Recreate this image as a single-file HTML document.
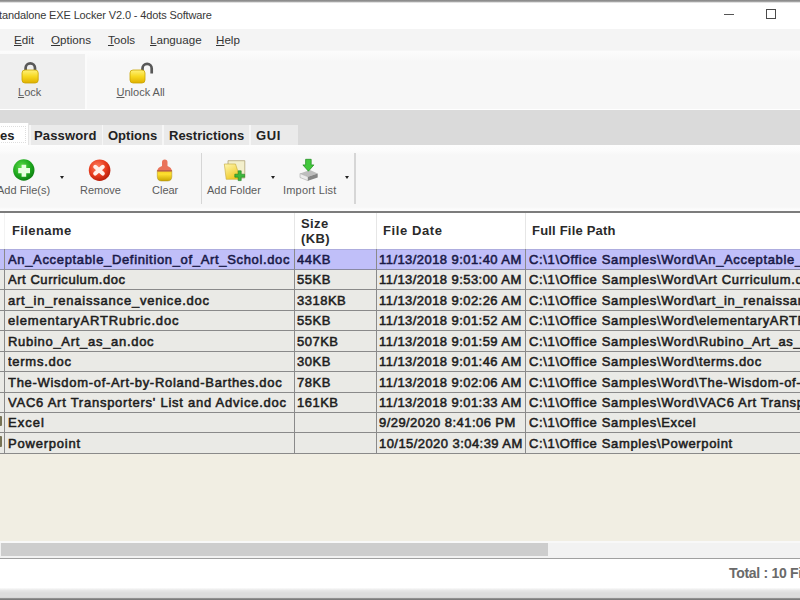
<!DOCTYPE html>
<html><head><meta charset="utf-8">
<style>
*{margin:0;padding:0;box-sizing:border-box}
html,body{width:800px;height:600px;overflow:hidden;background:#fff;font-family:"Liberation Sans",sans-serif}
.a{position:absolute}
.t{position:absolute;white-space:nowrap;line-height:1}
.r{position:absolute;left:0;width:800px;height:14px;font-size:13px;color:#1e1e1e;-webkit-text-stroke:.55px currentColor}
.r i{position:absolute;top:0;font-style:normal;white-space:nowrap;overflow:hidden;line-height:14px}
.s{color:#1a1a48}
.h{position:absolute;white-space:nowrap;line-height:1;font-size:13px;font-weight:bold;color:#2a2a2a;letter-spacing:.4px}
u{text-decoration:underline;text-underline-offset:.5px;text-decoration-thickness:1px}
</style></head><body>
<!-- top border -->
<!-- title bar -->
<div class="a" style="left:0;top:1px;width:800px;height:27px;background:#fff"></div>
<div class="a" style="left:0;top:0;width:800px;height:2.5px;background:linear-gradient(#8a8a8a,#909090 40%,#fff)"></div>
<div class="t" style="left:-1px;top:10px;font-size:11px;color:#383838;letter-spacing:-0.13px">tandalone EXE Locker V2.0 - 4dots Software</div>
<div class="a" style="left:724px;top:14px;width:10px;height:1px;background:#555"></div>
<div class="a" style="left:766px;top:9px;width:10px;height:10px;border:1px solid #4a4a4a"></div>
<!-- menu bar -->
<div class="a" style="left:0;top:28.5px;width:800px;height:22px;background:#f4f4f4"></div>
<div class="t" style="left:14px;top:34px;font-size:11.6px;color:#333"><u>E</u>dit</div>
<div class="t" style="left:51px;top:34px;font-size:11.6px;color:#333"><u>O</u>ptions</div>
<div class="t" style="left:108px;top:34px;font-size:11.6px;color:#333"><u>T</u>ools</div>
<div class="t" style="left:150px;top:34px;font-size:11.6px;color:#333"><u>L</u>anguage</div>
<div class="t" style="left:216px;top:34px;font-size:11.6px;color:#333"><u>H</u>elp</div>
<!-- toolbar 1 -->
<div class="a" style="left:0;top:50px;width:800px;height:59px;background:#f7f7f7"></div>
<div class="a" style="left:0;top:50.5px;width:800px;height:10px;background:linear-gradient(#fcfcfc,#fafafa 40%,#f7f7f7)"></div>
<div class="a" style="left:85px;top:54px;width:2px;height:55px;background:#fbfbfb"></div>
<div class="a" style="left:0;top:54px;width:85px;height:55px;background:#efefef"></div>
<div class="t" style="left:18px;top:87px;font-size:11px;color:#5c5c5c"><u>L</u>ock</div>
<div class="t" style="left:116.5px;top:87px;font-size:11px;color:#5c5c5c"><u>U</u>nlock All</div>
<!-- gray band -->
<div class="a" style="left:0;top:109.5px;width:800px;height:35.5px;background:#dadada"></div>
<!-- tabs -->
<div class="a" style="left:0;top:125px;width:297.5px;height:19.5px;background:#eaeaea"></div>
<div class="a" style="left:29px;top:125px;width:1.5px;height:20px;background:#f6f6f6"></div>
<div class="a" style="left:101.5px;top:125px;width:1.5px;height:20px;background:#f6f6f6"></div>
<div class="a" style="left:162px;top:125px;width:1.5px;height:20px;background:#f6f6f6"></div>
<div class="a" style="left:249px;top:125px;width:1.5px;height:20px;background:#f6f6f6"></div>
<div class="a" style="left:0;top:123px;width:29px;height:22px;background:#fff;border-right:1px solid #e4e4e4"></div>
<div class="a" style="left:-1px;top:126px;width:27px;height:16.5px;border:1px dotted #dedede"></div>
<div class="t" style="left:0px;top:128.5px;font-size:13px;font-weight:bold;color:#222">es</div>
<div class="t" style="left:34px;top:128.5px;font-size:13px;font-weight:bold;color:#222;letter-spacing:.15px">Password</div>
<div class="t" style="left:108px;top:128.5px;font-size:13px;font-weight:bold;color:#222">Options</div>
<div class="t" style="left:169px;top:128.5px;font-size:13px;font-weight:bold;color:#222">Restrictions</div>
<div class="t" style="left:256px;top:128.5px;font-size:13px;font-weight:bold;color:#222;letter-spacing:.6px">GUI</div>
<!-- toolbar 2 -->
<div class="a" style="left:0;top:144.5px;width:800px;height:66.5px;background:linear-gradient(#fdfdfd,#fbfbfb 6px,#f7f7f7 10px,#f7f7f7 62px,#fcfcfc 64px)"></div>
<div class="a" style="left:200.5px;top:153px;width:1.5px;height:51px;background:#d6d6d6"></div>
<div class="a" style="left:354px;top:153px;width:1.5px;height:51px;background:#d6d6d6"></div>
<div class="t" style="left:-3px;top:185px;font-size:11px;color:#5c5c5c">Add File(s)</div>
<div class="t" style="left:80px;top:185px;font-size:11px;color:#5c5c5c">Remove</div>
<div class="t" style="left:152px;top:185px;font-size:11px;color:#5c5c5c">Clear</div>
<div class="t" style="left:207px;top:185px;font-size:11px;color:#5c5c5c">Add Folder</div>
<div class="t" style="left:283px;top:185px;font-size:11px;color:#5c5c5c;letter-spacing:.2px">Import List</div>

<!-- lock icon -->
<svg class="a" style="left:18px;top:58px" width="24" height="28" viewBox="0 0 24 28">
<defs><linearGradient id="yl" x1="0" y1="0" x2="0" y2="1"><stop offset="0" stop-color="#fff27a"/><stop offset=".5" stop-color="#f7d820"/><stop offset="1" stop-color="#e0b000"/></linearGradient></defs>
<path d="M7.6 13 V10 a4.7 4.7 0 0 1 9.4 0 V13" fill="none" stroke="#585858" stroke-width="2.7"/>
<rect x="4" y="12" width="16.2" height="13" rx="3" fill="url(#yl)" stroke="#c9a300" stroke-width=".8"/>
</svg>
<!-- unlock icon -->
<svg class="a" style="left:126px;top:58px" width="30" height="28" viewBox="0 0 30 28">
<path d="M16.5 13.5 V10.5 a4.6 4.6 0 0 1 9.2 0 V15.5" fill="none" stroke="#585858" stroke-width="2.7"/>
<rect x="4" y="12" width="15" height="13" rx="3" fill="url(#yl)" stroke="#c9a300" stroke-width=".8"/>
</svg>
<!-- add files -->
<svg class="a" style="left:12px;top:158px" width="24" height="24" viewBox="0 0 24 24">
<defs><radialGradient id="gr" cx=".4" cy=".35" r=".7"><stop offset="0" stop-color="#5fdc4a"/><stop offset=".6" stop-color="#1ea81e"/><stop offset="1" stop-color="#0c7a10"/></radialGradient>
<radialGradient id="rd" cx=".4" cy=".35" r=".7"><stop offset="0" stop-color="#ff8060"/><stop offset=".6" stop-color="#e63a1c"/><stop offset="1" stop-color="#b01a08"/></radialGradient></defs>
<circle cx="11.8" cy="12" r="10.7" fill="url(#gr)"/>
<path d="M9.6 6.8h4.6v3.3h3.8v5.2h-3.8v3.5H9.6v-3.5H6.2V10.1h3.4z" fill="#e8ffe0"/>
</svg>
<div class="a" style="left:60px;top:176px;width:0;height:0;border-left:2.5px solid transparent;border-right:2.5px solid transparent;border-top:3px solid #222"></div>
<!-- remove -->
<svg class="a" style="left:88px;top:159px" width="24" height="24" viewBox="0 0 24 24">
<circle cx="11.6" cy="11.2" r="10.8" fill="url(#rd)"/>
<path d="M7.2 7.8 L14.8 14.6 M14.8 7.8 L7.2 14.6" stroke="#fff0ea" stroke-width="4" stroke-linecap="round"/>
</svg>
<!-- clear brush -->
<svg class="a" style="left:155px;top:158px" width="20" height="25" viewBox="0 0 20 25">
<defs><linearGradient id="by" x1="0" y1="0" x2="0" y2="1"><stop offset="0" stop-color="#f0d020"/><stop offset=".35" stop-color="#ffe030"/><stop offset="1" stop-color="#c8a400"/></linearGradient></defs>
<path d="M7 4.2 a2.75 2.7 0 0 1 5.5 0 V8 Q16.8 9.5 16.8 13 H2.3 Q2.3 9.5 7 8 Z" fill="#e9735a"/>
<path d="M2.3 12.5 H16.8 V18.5 Q16.8 23 12.5 23 H6.6 Q2.3 23 2.3 18.5 Z" fill="url(#by)" stroke="#a89020" stroke-width=".5"/>
<rect x="2.3" y="12" width="14.5" height="1.6" fill="#b8604a"/>
</svg>
<!-- add folder -->
<svg class="a" style="left:222px;top:158px" width="26" height="26" viewBox="0 0 26 26">
<defs><linearGradient id="fy" x1="0" y1="0" x2=".6" y2="1"><stop offset="0" stop-color="#fff7b0"/><stop offset="1" stop-color="#efc820"/></linearGradient></defs>
<path d="M6 2.7 H22.8 V20 H6 Z" fill="#f3efcc" stroke="#a89a68" stroke-width=".7"/>
<path d="M2.3 6 H13.5 L18.5 21.3 H4.2 Z" fill="url(#fy)" stroke="#c4a838" stroke-width=".6"/>
<path d="M16.2 12.8h3v3.4h3.4v3h-3.4v3.4h-3v-3.4h-3.4v-3h3.4z" fill="#3cb83c" stroke="#1f801f" stroke-width=".6"/>
</svg>
<div class="a" style="left:271px;top:176px;width:0;height:0;border-left:2.5px solid transparent;border-right:2.5px solid transparent;border-top:3px solid #222"></div>
<!-- import list -->
<svg class="a" style="left:298px;top:157px" width="22" height="26" viewBox="0 0 22 26">
<path d="M2 16.5 L12 13 L19.7 16.5 L10 19.8 Z" fill="#bdbdbd"/>
<path d="M2 16.5 L10 19.8 L10 23.7 L2 20.5 Z" fill="#ececec" stroke="#9a9a9a" stroke-width=".5"/>
<path d="M10 19.8 L19.7 16.5 L19.7 20.5 L10 23.7 Z" fill="#858585"/>
<path d="M7.6 2.3 h5.6 v5.6 h2.7 l-5.5 6.3 l-5.5 -6.3 h2.7 z" fill="#42c83c" stroke="#1e8a1e" stroke-width=".7" stroke-linejoin="round"/>
</svg>
<div class="a" style="left:345px;top:176px;width:0;height:0;border-left:2.5px solid transparent;border-right:2.5px solid transparent;border-top:3px solid #222"></div>
<!-- grid -->
<div class="a" style="left:0;top:211px;width:800px;height:2px;background:#7c7c7c"></div>
<div class="a" style="left:0;top:213px;width:800px;height:36px;background:#fff"></div>
<div class="a" style="left:0;top:249px;width:800px;height:205px;background:#eaeae6"></div>
<div class="a" style="left:0;top:248.5px;width:800px;height:20.5px;background:#c0bff9"></div>
<div class="a" style="left:0;top:248.5px;width:800px;height:1.5px;background:#aeaddf"></div>

<div class="h" style="left:12px;top:223.5px">Filename</div>
<div class="h" style="left:301px;top:217px">Size</div>
<div class="h" style="left:301px;top:231.5px">(KB)</div>
<div class="h" style="left:383px;top:223.5px;letter-spacing:.6px">File Date</div>
<div class="h" style="left:532px;top:223.5px;letter-spacing:.2px">Full File Path</div>
<div class="a" style="left:4px;top:213px;width:1px;height:36px;background:#f3f3f3"></div>
<div class="a" style="left:294px;top:213px;width:1px;height:36px;background:#e6e6e6"></div>
<div class="a" style="left:376px;top:213px;width:1px;height:36px;background:#e6e6e6"></div>
<div class="a" style="left:525px;top:213px;width:1px;height:36px;background:#e6e6e6"></div>
<div class="r s" style="top:253.0px"><i style="left:8px;width:284px;letter-spacing:0.66px">An_Acceptable_Definition_of_Art_Schol.doc</i><i style="left:297px;width:78px;letter-spacing:.5px">44KB</i><i style="left:379px;width:144px;letter-spacing:.44px">11/13/2018 9:01:40 AM</i><i style="left:529px;width:280px;letter-spacing:.66px">C:\1\Office Samples\Word\An_Acceptable_Definition_of_Art_Schol.doc</i></div>
<div class="r" style="top:273.4px"><i style="left:8px;width:284px;letter-spacing:0.55px">Art Curriculum.doc</i><i style="left:297px;width:78px;letter-spacing:.5px">55KB</i><i style="left:379px;width:144px;letter-spacing:.44px">11/13/2018 9:53:00 AM</i><i style="left:529px;width:280px;letter-spacing:.66px">C:\1\Office Samples\Word\Art Curriculum.doc</i></div>
<div class="r" style="top:293.8px"><i style="left:8px;width:284px;letter-spacing:0.78px">art_in_renaissance_venice.doc</i><i style="left:297px;width:78px;letter-spacing:.5px">3318KB</i><i style="left:379px;width:144px;letter-spacing:.44px">11/13/2018 9:02:26 AM</i><i style="left:529px;width:280px;letter-spacing:.66px">C:\1\Office Samples\Word\art_in_renaissance_venice.doc</i></div>
<div class="r" style="top:314.2px"><i style="left:8px;width:284px;letter-spacing:0.83px">elementaryARTRubric.doc</i><i style="left:297px;width:78px;letter-spacing:.5px">55KB</i><i style="left:379px;width:144px;letter-spacing:.44px">11/13/2018 9:01:52 AM</i><i style="left:529px;width:280px;letter-spacing:.66px">C:\1\Office Samples\Word\elementaryARTRubric.doc</i></div>
<div class="r" style="top:334.6px"><i style="left:8px;width:284px;letter-spacing:0.7px">Rubino_Art_as_an.doc</i><i style="left:297px;width:78px;letter-spacing:.5px">507KB</i><i style="left:379px;width:144px;letter-spacing:.44px">11/13/2018 9:01:59 AM</i><i style="left:529px;width:280px;letter-spacing:.66px">C:\1\Office Samples\Word\Rubino_Art_as_an.doc</i></div>
<div class="r" style="top:355.1px"><i style="left:8px;width:284px;letter-spacing:0.73px">terms.doc</i><i style="left:297px;width:78px;letter-spacing:.5px">30KB</i><i style="left:379px;width:144px;letter-spacing:.44px">11/13/2018 9:01:46 AM</i><i style="left:529px;width:280px;letter-spacing:.66px">C:\1\Office Samples\Word\terms.doc</i></div>
<div class="r" style="top:375.5px"><i style="left:8px;width:284px;letter-spacing:0.7px">The-Wisdom-of-Art-by-Roland-Barthes.doc</i><i style="left:297px;width:78px;letter-spacing:.5px">78KB</i><i style="left:379px;width:144px;letter-spacing:.44px">11/13/2018 9:02:06 AM</i><i style="left:529px;width:280px;letter-spacing:.66px">C:\1\Office Samples\Word\The-Wisdom-of-Art-by-Roland-Barthes.doc</i></div>
<div class="r" style="top:395.9px"><i style="left:8px;width:284px;letter-spacing:0.75px">VAC6 Art Transporters&#x27; List and Advice.doc</i><i style="left:297px;width:78px;letter-spacing:.5px">161KB</i><i style="left:379px;width:144px;letter-spacing:.44px">11/13/2018 9:01:33 AM</i><i style="left:529px;width:280px;letter-spacing:.66px">C:\1\Office Samples\Word\VAC6 Art Transporters&#x27; List and Advice.doc</i></div>
<div class="r" style="top:416.3px"><i style="left:8px;width:284px;letter-spacing:1.0px">Excel</i><i style="left:297px;width:78px;letter-spacing:.5px"></i><i style="left:379px;width:144px;letter-spacing:.44px">9/29/2020 8:41:06 PM</i><i style="left:529px;width:280px;letter-spacing:.66px">C:\1\Office Samples\Excel</i></div>
<div class="r" style="top:436.7px"><i style="left:8px;width:284px;letter-spacing:0.78px">Powerpoint</i><i style="left:297px;width:78px;letter-spacing:.5px"></i><i style="left:379px;width:144px;letter-spacing:.44px">10/15/2020 3:04:39 AM</i><i style="left:529px;width:280px;letter-spacing:.66px">C:\1\Office Samples\Powerpoint</i></div>
<div class="a" style="left:0;top:269.0px;width:800px;height:1px;background:#8a8aa2"></div>
<div class="a" style="left:0;top:289.4px;width:800px;height:1px;background:#8a8a8a"></div>
<div class="a" style="left:0;top:309.8px;width:800px;height:1px;background:#8a8a8a"></div>
<div class="a" style="left:0;top:330.2px;width:800px;height:1px;background:#8a8a8a"></div>
<div class="a" style="left:0;top:350.6px;width:800px;height:1px;background:#8a8a8a"></div>
<div class="a" style="left:0;top:371.1px;width:800px;height:1px;background:#8a8a8a"></div>
<div class="a" style="left:0;top:391.5px;width:800px;height:1px;background:#8a8a8a"></div>
<div class="a" style="left:0;top:411.9px;width:800px;height:1px;background:#8a8a8a"></div>
<div class="a" style="left:0;top:432.3px;width:800px;height:1px;background:#8a8a8a"></div>
<div class="a" style="left:0;top:452.7px;width:800px;height:1px;background:#8a8a8a"></div>

<div class="a" style="left:4px;top:249px;width:1px;height:204px;background:#8a8a8a"></div>
<div class="a" style="left:294px;top:249px;width:1px;height:204px;background:#8a8a8a"></div>
<div class="a" style="left:376px;top:249px;width:1px;height:204px;background:#8a8a8a"></div>
<div class="a" style="left:525px;top:249px;width:1px;height:204px;background:#8a8a8a"></div>

<div class="a" style="left:0;top:415.5px;width:2px;height:10px;background:#767255;border-radius:0 1px 1px 0"></div>
<div class="a" style="left:0;top:436px;width:2px;height:10.5px;background:#767255;border-radius:0 1px 1px 0"></div>
<!-- empty -->
<div class="a" style="left:0;top:454px;width:800px;height:87px;background:#f1eee3"></div>
<!-- scrollbar -->
<div class="a" style="left:0;top:541px;width:800px;height:17px;background:#f2f2f2"></div>
<div class="a" style="left:0;top:541px;width:800px;height:2px;background:#f8f8f8"></div>
<div class="a" style="left:1px;top:543px;width:547px;height:13px;background:#cdcdcd"></div>
<div class="a" style="left:0;top:557.5px;width:800px;height:1.5px;background:#a0a0a0"></div>
<!-- status -->
<div class="a" style="left:0;top:559px;width:800px;height:29px;background:#fff"></div>
<div class="t" style="left:729px;top:566px;font-size:14px;font-weight:bold;color:#6a6a6a;letter-spacing:-.3px">Total : 10 Files</div>
<div class="a" style="left:0;top:587.5px;width:800px;height:10.5px;background:linear-gradient(#fbfbfb,#e6e6e6 2.5px,#dcdcdc 5px,#dcdcdc 9px,#d0d0d0)"></div>
<div class="a" style="left:0;top:598px;width:800px;height:2px;background:linear-gradient(#9a9a9a,#707070)"></div>
</body></html>
